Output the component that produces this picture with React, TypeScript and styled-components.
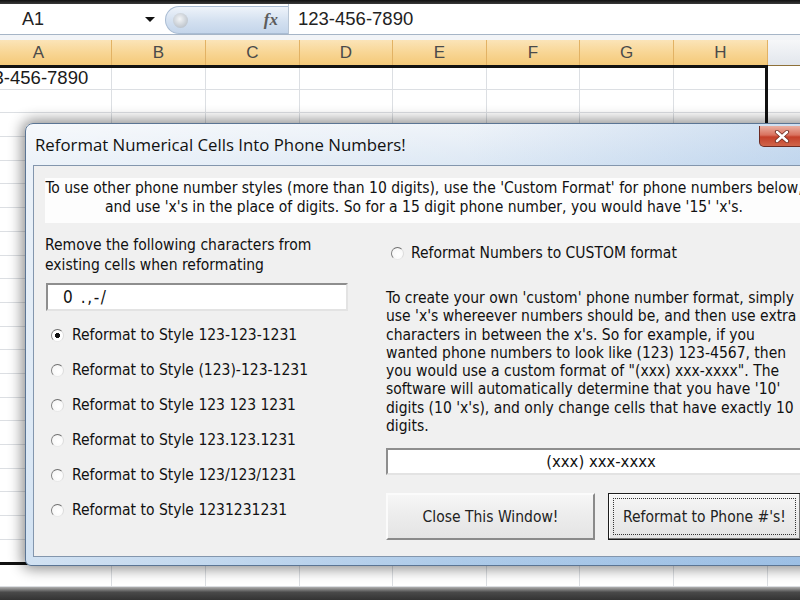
import styled, { createGlobalStyle } from 'styled-components';

const GlobalStyle = createGlobalStyle`
  html, body {
    margin: 0;
    padding: 0;
    background: #fff;
    overflow: hidden;
  }
`;

const dialogFont = `"DejaVu Sans Condensed", "DejaVu Sans", Tahoma, sans-serif`;

const Screen = styled.div`
  position: relative;
  width: 800px;
  height: 600px;
  overflow: hidden;
  display: flex;
  flex-direction: column;
  background: #fff;
  font-family: "Liberation Sans", Arial, sans-serif;
`;

const TopEdge = styled.div`
  flex: none;
  height: 4px;
  background: linear-gradient(#111, #3a3a3a);
`;

const FormulaBar = styled.div`
  flex: none;
  height: 30px;
  display: flex;
  background: #fff;
  border-bottom: 1px solid #a6b5c7;
`;

const NameBox = styled.div`
  width: 160px;
  box-sizing: border-box;
  display: flex;
  align-items: center;
  justify-content: space-between;
  padding: 0 5px 0 22px;
  font-size: 18px;
  color: #222;
`;

const DropArrow = styled.span`
  width: 0;
  height: 0;
  border-left: 5px solid transparent;
  border-right: 5px solid transparent;
  border-top: 5px solid #111;
`;

const FxPill = styled.div`
  width: 123px;
  margin: 2px 0 0 5px;
  box-sizing: border-box;
  display: flex;
  align-items: center;
  justify-content: space-between;
  padding: 0 10px 0 7px;
  border: 1px solid #a9bcd3;
  border-right: none;
  border-radius: 15px 0 0 15px;
  background: linear-gradient(#eef3fa, #d3e0f0 55%, #c4d5ea);
`;

const Knob = styled.span`
  width: 15px;
  height: 15px;
  border-radius: 50%;
  background: radial-gradient(circle at 45% 40%, #f4f6f8 0%, #c7cdd4 60%, #aab3bd 100%);
`;

const Fx = styled.span`
  font-family: "Liberation Serif", serif;
  font-style: italic;
  font-weight: bold;
  font-size: 17px;
  color: #5c5c5c;
`;

const FormulaText = styled.div`
  flex: 1;
  display: flex;
  align-items: center;
  padding-left: 9px;
  border-left: 1px solid #b8c5d4;
  font-size: 18.5px;
  color: #222;
`;

const Spacer = styled.div`
  flex: none;
  height: 5px;
  background: #f2f4f7;
`;

const Sheet = styled.div`
  flex: none;
  margin-left: -34px;
  display: flex;
  flex-direction: column;
`;

const HeaderRow = styled.div`
  display: flex;
  height: 26px;
  box-sizing: border-box;
  border-bottom: 1px solid #8e7038;
`;

const HeaderCell = styled.div<{ $w: number }>`
  flex: none;
  width: ${(p) => p.$w}px;
  box-sizing: border-box;
  display: flex;
  align-items: center;
  justify-content: center;
  border-right: 1px solid #e2b264;
  background: linear-gradient(#fbe4b8, #f8d695 50%, #f4c979);
  font-size: 17px;
  color: #4a4a4a;
`;

const HeaderRest = styled.div`
  flex: 1;
  background: linear-gradient(#f6f7f9, #e2e6ec);
`;

const Row = styled.div`
  display: flex;
  height: 23.7px;
  box-sizing: border-box;
  border-bottom: 1px solid #dcdfe3;
`;

const Cell = styled.div<{ $w: number }>`
  flex: none;
  width: ${(p) => p.$w}px;
  box-sizing: border-box;
  border-right: 1px solid #dcdfe3;
  padding-left: 7px;
  font-size: 18.5px;
  line-height: 23px;
  color: #1a1a1a;
  white-space: nowrap;
`;

const CellRest = styled.div`
  flex: 1;
`;

const BottomBand = styled.div`
  flex: 1;
  background: linear-gradient(#b0b0b0, #4a4a4a 40%, #333);
`;

const Selection = styled.div`
  position: absolute;
  left: -10px;
  top: 65px;
  width: 778px;
  height: 500px;
  box-sizing: border-box;
  border: 3px solid #111;
  pointer-events: none;
`;

const Dialog = styled.div`
  position: absolute;
  left: 25px;
  top: 123px;
  width: 800px;
  height: 443px;
  box-sizing: border-box;
  display: flex;
  flex-direction: column;
  padding: 0 7px 8px 7px;
  border: 1px solid #5b7594;
  border-radius: 8px 8px 6px 6px;
  background:
    linear-gradient(to right, rgba(255, 255, 255, 0.5), rgba(255, 255, 255, 0.1) 55%, rgba(140, 180, 225, 0.35)),
    linear-gradient(#edf2f8, #d8e5f3 45px, #bcd4ed 70%, #a3c4e6);
  box-shadow: 0 0 14px 3px rgba(0, 0, 0, 0.45);
`;

const TitleBar = styled.div`
  flex: none;
  height: 41px;
  display: flex;
  align-items: center;
  padding-left: 2px;
`;

const Title = styled.span`
  font-family: "Open Sans", "Liberation Sans", sans-serif;
  font-size: 16.8px;
  color: #111;
`;

const CloseButton = styled.div`
  align-self: flex-start;
  margin: 2px 12px 0 auto;
  width: 46px;
  height: 21px;
  box-sizing: border-box;
  display: flex;
  align-items: center;
  justify-content: center;
  border: 1px solid #6e2b22;
  border-top: none;
  border-radius: 0 0 5px 5px;
  background: linear-gradient(#eab0a2, #d9725f 45%, #c4402a 55%, #d0654a);
`;

const Client = styled.div`
  flex: 1;
  display: flex;
  flex-direction: column;
  background: #f0f0f0;
  border: 1px solid #8396ad;
  font-family: ${dialogFont};
  font-stretch: condensed;
  font-size: 15.5px;
  color: #111;
`;

const InfoBox = styled.div`
  margin: 12px 13px 0 11px;
  height: 45px;
  padding-top: 1px;
  box-sizing: border-box;
  background: #fdfdfd;
  text-align: center;
  line-height: 19px;
  white-space: nowrap;
  overflow: hidden;
`;

const Line = styled.div`
  white-space: nowrap;
`;

const Body = styled.div`
  display: grid;
  grid-template-columns: 341px 1fr;
  margin-top: 12px;
  padding-left: 11px;
`;

const Column = styled.div`
  display: flex;
  flex-direction: column;
`;

const Prompt = styled.div`
  line-height: 20px;
`;

const TextField = styled.input<{ $center?: boolean }>`
  box-sizing: border-box;
  margin: 0;
  border: 2px solid;
  border-color: #8e8e8e #e3e3e3 #e3e3e3 #8e8e8e;
  background: #fff;
  outline: none;
  font-family: ${dialogFont};
  font-stretch: condensed;
  color: #111;
  text-align: ${(p) => (p.$center ? 'center' : 'left')};
`;

const CharsField = styled(TextField)`
  margin: 8px 0 0 1px;
  width: 302px;
  height: 28px;
  padding-left: 15px;
  font-size: 17px;
  letter-spacing: 1.6px;
`;

const FormatField = styled(TextField)`
  margin-top: 13px;
  width: 100%;
  height: 27px;
  font-size: 16.5px;
`;

const RadioList = styled.div`
  margin-top: 6.5px;
  display: flex;
  flex-direction: column;
`;

const RadioRow = styled.div<{ $pad: number; $gap: number; $h: number }>`
  height: ${(p) => p.$h}px;
  display: flex;
  align-items: center;
  gap: ${(p) => p.$gap}px;
  padding-left: ${(p) => p.$pad}px;
`;

const RadioDot = styled.span<{ $on?: boolean }>`
  flex: none;
  width: 13px;
  height: 13px;
  box-sizing: border-box;
  border-radius: 50%;
  border: 1px solid;
  border-color: #6f6f6f #dcdcdc #e8e8e8 #808080;
  background: ${(p) =>
    p.$on
      ? 'radial-gradient(circle, #111 0 2.3px, #fff 2.8px)'
      : 'radial-gradient(circle at 60% 60%, #fff, #f4f4f4)'};
`;

const Paragraph = styled.div`
  margin-top: 18px;
  line-height: 18.3px;
  white-space: nowrap;
`;

const ButtonRow = styled.div`
  margin-top: 18px;
  display: flex;
  gap: 13px;
`;

const Button = styled.div<{ $default?: boolean }>`
  flex: none;
  width: ${(p) => (p.$default ? 193 : 209)}px;
  height: 47px;
  box-sizing: border-box;
  display: flex;
  align-items: center;
  justify-content: center;
  background: linear-gradient(#f6f6f6, #ececec 50%, #e4e4e4);
  border: ${(p) => (p.$default ? '1px solid #1c1c1c' : '2px solid')};
  border-color: ${(p) => (p.$default ? '#1c1c1c' : '#fbfbfb #8a8a8a #8a8a8a #fbfbfb')};
  box-shadow: ${(p) => (p.$default ? 'inset -1px -1px 0 #777, inset 1px 1px 0 #fff' : 'none')};
  outline: ${(p) => (p.$default ? '1px dotted #333' : 'none')};
  outline-offset: -6px;
  font-size: 15.5px;
  color: #222;
  white-space: nowrap;
`;

const columns = [
  { label: 'A', w: 146 },
  { label: 'B', w: 94 },
  { label: 'C', w: 94 },
  { label: 'D', w: 93 },
  { label: 'E', w: 94 },
  { label: 'F', w: 93 },
  { label: 'G', w: 94 },
  { label: 'H', w: 94 },
];

const styles = [
  '123-123-1231',
  '(123)-123-1231',
  '123 123 1231',
  '123.123.1231',
  '123/123/1231',
  '1231231231',
];

const customText = [
  "To create your own 'custom' phone number format, simply",
  "use 'x's whereever numbers should be, and then use extra",
  "characters in between the x's. So for example, if you",
  'wanted phone numbers to look like (123) 123-4567, then',
  'you would use a custom format of "(xxx) xxx-xxxx". The',
  "software will automatically determine that you have '10'",
  "digits (10 'x's), and only change cells that have exactly 10",
  'digits.',
];

const rowCount = 22;

function CloseGlyph() {
  return (
    <svg width="16" height="13" viewBox="0 0 16 13">
      <path d="M3 2 L13 11 M13 2 L3 11" stroke="#6b2a20" strokeWidth="4.2" strokeLinecap="round" />
      <path d="M3 2 L13 11 M13 2 L3 11" stroke="#fff" strokeWidth="2.6" strokeLinecap="round" />
    </svg>
  );
}

export default function App() {
  return (
    <Screen>
      <GlobalStyle />
      <TopEdge />
      <FormulaBar>
        <NameBox>
          A1
          <DropArrow />
        </NameBox>
        <FxPill>
          <Knob />
          <Fx>fx</Fx>
        </FxPill>
        <FormulaText>123-456-7890</FormulaText>
      </FormulaBar>
      <Spacer />
      <Sheet>
        <HeaderRow>
          {columns.map((c) => (
            <HeaderCell key={c.label} $w={c.w}>
              {c.label}
            </HeaderCell>
          ))}
          <HeaderRest />
        </HeaderRow>
        {Array.from({ length: rowCount }).map((_, r) => (
          <Row key={r}>
            {columns.map((c, i) => (
              <Cell key={c.label} $w={c.w}>
                {r === 0 && i === 0 ? '123-456-7890' : ''}
              </Cell>
            ))}
            <CellRest />
          </Row>
        ))}
      </Sheet>
      <BottomBand />
      <Selection />

      <Dialog>
        <TitleBar>
          <Title>Reformat Numerical Cells Into Phone Numbers!</Title>
          <CloseButton>
            <CloseGlyph />
          </CloseButton>
        </TitleBar>
        <Client>
          <InfoBox>
            <Line>
              To use other phone number styles (more than 10 digits), use the 'Custom Format' for phone numbers below,
            </Line>
            <Line>and use 'x's in the place of digits. So for a 15 digit phone number, you would have '15' 'x's.</Line>
          </InfoBox>
          <Body>
            <Column>
              <Prompt>
                Remove the following characters from
                <br />
                existing cells when reformating
              </Prompt>
              <CharsField readOnly value="0 .,-/" />
              <RadioList>
                {styles.map((s, i) => (
                  <RadioRow key={s} $pad={6} $gap={8} $h={35}>
                    <RadioDot $on={i === 0} />
                    Reformat to Style {s}
                  </RadioRow>
                ))}
              </RadioList>
            </Column>
            <Column>
              <RadioRow $pad={5} $gap={7} $h={36}>
                <RadioDot />
                Reformat Numbers to CUSTOM format
              </RadioRow>
              <Paragraph>
                {customText.map((t) => (
                  <Line key={t}>{t}</Line>
                ))}
              </Paragraph>
              <FormatField readOnly $center value="(xxx) xxx-xxxx" />
              <ButtonRow>
                <Button>Close This Window!</Button>
                <Button $default>Reformat to Phone #'s!</Button>
              </ButtonRow>
            </Column>
          </Body>
        </Client>
      </Dialog>
    </Screen>
  );
}
